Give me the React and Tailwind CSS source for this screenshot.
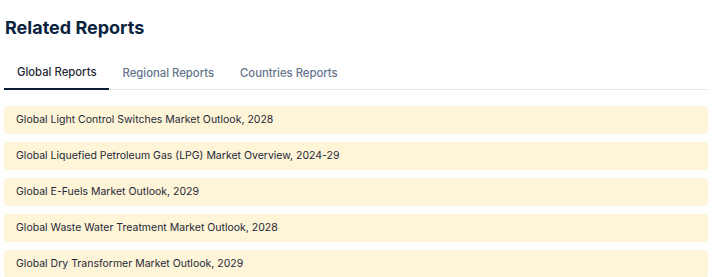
const reports = [
  "Global Light Control Switches Market Outlook, 2028",
  "Global Liquefied Petroleum Gas (LPG) Market Overview, 2024-29",
  "Global E-Fuels Market Outlook, 2029",
  "Global Waste Water Treatment Market Outlook, 2028",
  "Global Dry Transformer Market Outlook, 2029",
];

const tabs = ["Global Reports", "Regional Reports", "Countries Reports"];

export default function App() {
  return (
    <div className="bg-white min-h-screen pl-1 pr-[13px] pt-[15px] font-['Inter',sans-serif]">
      <h2 className="pl-[1px] text-[18px] leading-[26px] font-bold text-[#0c2340]">
        Related Reports
      </h2>

      {/* Tabs */}
      <div className="mt-[23px] flex border-b border-[#e5e7eb]">
        {tabs.map((tab, i) => (
          <button
            key={tab}
            className={
              i === 0
                ? "px-[13px] pb-[8px] text-[11.3px] leading-[16px] font-medium text-[#1f2937] border-b-2 border-[#0c1e33] -mb-[1px]"
                : "px-[13px] pb-[8px] text-[11.3px] leading-[16px] font-medium text-[#64748b]"
            }
          >
            {tab}
          </button>
        ))}
      </div>

      {/* Report list */}
      <div className="mt-[16px] flex flex-col gap-2">
        {reports.map((r) => (
          <div
            key={r}
            className="h-[28px] flex items-center px-3 rounded bg-[#fef4d8] text-[10.5px] text-[#1f2937]"
          >
            {r}
          </div>
        ))}
      </div>
    </div>
  );
}
